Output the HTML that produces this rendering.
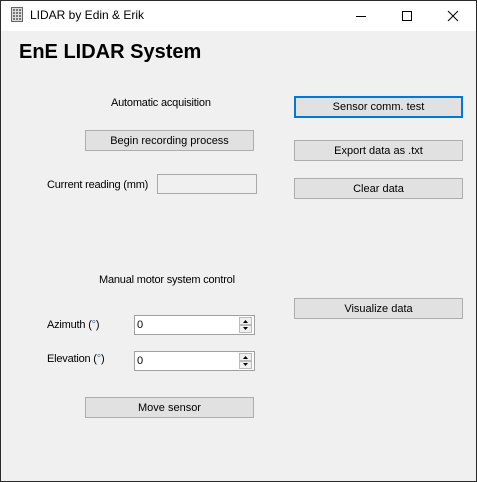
<!DOCTYPE html>
<html><head><meta charset="utf-8"><style>
*{margin:0;padding:0;box-sizing:border-box}
body{width:477px;height:482px;background:#f0f0f0;font-family:"Liberation Sans",sans-serif;font-size:11px;color:#000;position:relative;overflow:hidden}
.a{position:absolute;white-space:nowrap}
.frame{position:absolute;left:0;top:0;width:477px;height:482px;border:1px solid #2b2b2b;border-right-color:#262626;pointer-events:none}
.title{position:absolute;left:1px;top:1px;width:475px;height:30px;background:#fff}
.btn{position:absolute;background:#e1e1e1;border:1px solid #adadad;text-align:center;line-height:20px;font-size:11px}
.tb{position:absolute;background:#fff;border:1px solid #a0a0a0}
.lbl{position:absolute;white-space:nowrap;font-size:11px;letter-spacing:-0.2px}
</style></head><body>
<div class="title"></div>
<svg class="a" style="left:11px;top:7px" width="13" height="15" viewBox="0 0 13 15">
<rect x="0.5" y="0.5" width="11" height="14" fill="#ddd" stroke="#666"/>
<g fill="#777"><rect x="2" y="2" width="2" height="2"/><rect x="5" y="2" width="2" height="2"/><rect x="8" y="2" width="2" height="2"/>
<rect x="2" y="5" width="2" height="2"/><rect x="5" y="5" width="2" height="2"/><rect x="8" y="5" width="2" height="2"/>
<rect x="2" y="8" width="2" height="2"/><rect x="5" y="8" width="2" height="2"/><rect x="8" y="8" width="2" height="2"/>
<rect x="2" y="11" width="2" height="2"/><rect x="5" y="11" width="2" height="2"/><rect x="8" y="11" width="2" height="2"/></g></svg>
<div class="a" style="left:30px;top:8px;font-size:12px">LIDAR by Edin &amp; Erik</div>
<svg class="a" style="left:355px;top:10px" width="110" height="12">
<line x1="1" y1="6.5" x2="11" y2="6.5" stroke="#000"/>
<rect x="47.5" y="1.5" width="9" height="9" fill="none" stroke="#000"/>
<path d="M93 1 L103 11 M103 1 L93 11" stroke="#000"/></svg>
<div class="a" style="left:19px;top:41px;font-size:20px;font-weight:bold">EnE LIDAR System</div>

<div class="lbl" style="left:111px;top:97px">Automatic acquisition</div>
<div class="btn" style="left:85px;top:130px;width:169px;height:21px">Begin recording process</div>
<div class="lbl" style="left:47px;top:179px">Current reading (mm)</div>
<div class="tb" style="left:157px;top:174px;width:100px;height:20px;background:#f0f0f0;border-color:#a8a8a8"></div>

<div class="btn" style="left:294px;top:96px;width:169px;height:22px;border:2px solid #0078d7;line-height:19px">Sensor comm. test</div>
<div class="btn" style="left:294px;top:140px;width:169px;height:21px">Export data as .txt</div>
<div class="btn" style="left:294px;top:178px;width:169px;height:21px">Clear data</div>

<div class="lbl" style="left:99px;top:274px">Manual motor system control</div>
<div class="btn" style="left:294px;top:298px;width:169px;height:21px">Visualize data</div>

<div class="lbl" style="left:47px;top:319px">Azimuth (<span style="color:#4a6ea9">°</span>)</div>
<div class="tb" style="left:134px;top:315px;width:121px;height:20px"><span class="a" style="left:2px;top:3px">0</span>
<svg class="a" style="left:104px;top:1px" width="13" height="16"><rect x="0.5" y="0.5" width="12" height="7" fill="#f0f0f0" stroke="#bbb"/><rect x="0.5" y="8.5" width="12" height="7" fill="#f0f0f0" stroke="#bbb"/><path d="M4 6h5l-2.5-3z M4 10h5l-2.5 3z" fill="#000"/></svg></div>
<div class="lbl" style="left:47px;top:353px">Elevation (<span style="color:#4a6ea9">°</span>)</div>
<div class="tb" style="left:134px;top:351px;width:121px;height:20px"><span class="a" style="left:2px;top:3px">0</span>
<svg class="a" style="left:104px;top:1px" width="13" height="16"><rect x="0.5" y="0.5" width="12" height="7" fill="#f0f0f0" stroke="#bbb"/><rect x="0.5" y="8.5" width="12" height="7" fill="#f0f0f0" stroke="#bbb"/><path d="M4 6h5l-2.5-3z M4 10h5l-2.5 3z" fill="#000"/></svg></div>
<div class="btn" style="left:85px;top:397px;width:169px;height:21px">Move sensor</div>
<div class="frame"></div>
</body></html>
